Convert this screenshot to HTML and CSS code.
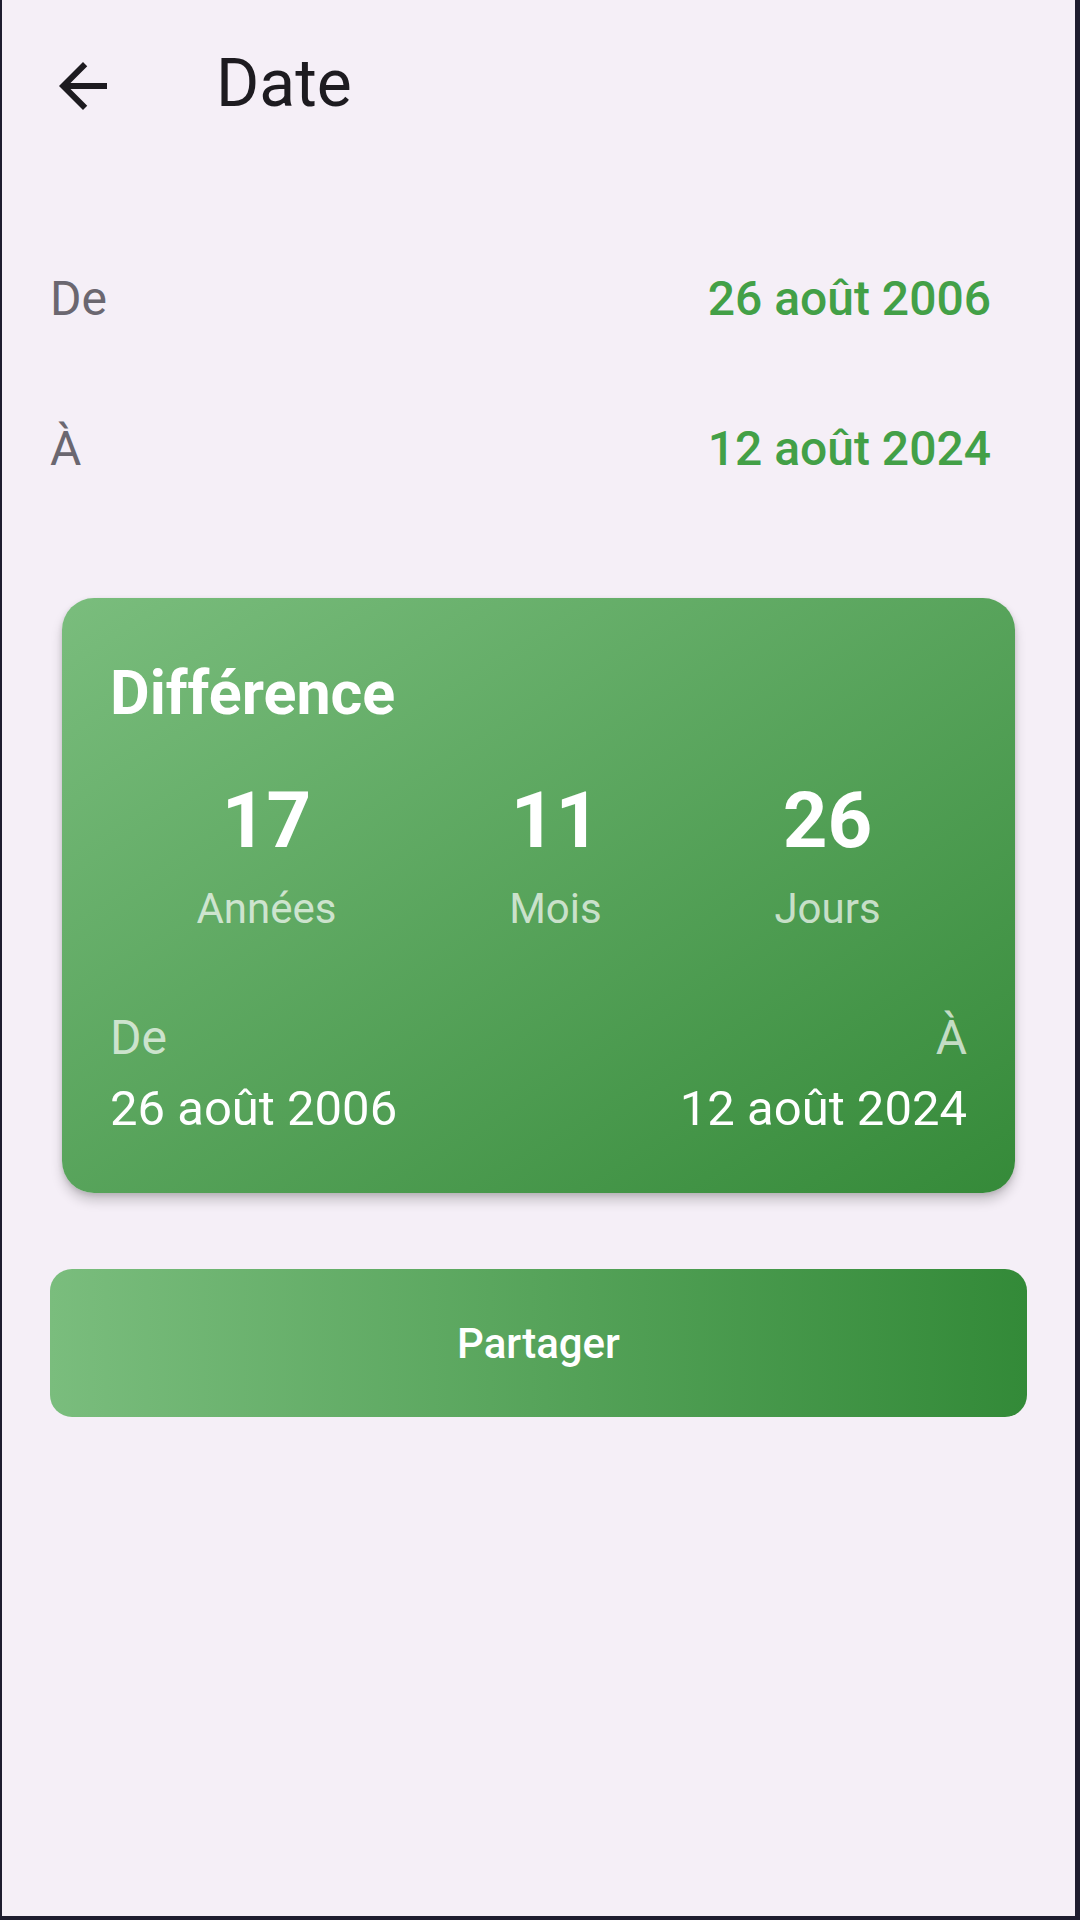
FILE: index.html
```html
<!DOCTYPE html>
<html lang="fr">
<head>
    <meta charset="UTF-8">
    <meta name="viewport" content="width=device-width, initial-scale=1.0">
    <title>Date</title>
    <link rel="stylesheet" href="styles.css">
</head>
<body>
    <div class="app">
        <header class="app-bar">
            <div class="back-button">
                <svg viewBox="0 0 24 24" width="72" height="72">
                    <path d="M20 11H7.83l5.59-5.59L12 4l-8 8 8 8 1.41-1.41L7.83 13H20v-2z" fill="#1d1b20"/>
                </svg>
            </div>
            <div class="title">Date</div>
        </header>

        <div class="content">
            <div class="date-row">
                <div class="row-label">De</div>
                <div class="row-value">26 août 2006</div>
            </div>
            <div class="date-row">
                <div class="row-label">À</div>
                <div class="row-value">12 août 2024</div>
            </div>

            <div class="result-card">
                <div class="card-title">Différence</div>
                <div class="diff-grid">
                    <div class="diff-unit">
                        <div class="diff-number">17</div>
                        <div class="diff-label">Années</div>
                    </div>
                    <div class="diff-unit">
                        <div class="diff-number">11</div>
                        <div class="diff-label">Mois</div>
                    </div>
                    <div class="diff-unit">
                        <div class="diff-number">26</div>
                        <div class="diff-label">Jours</div>
                    </div>
                </div>
                <div class="range">
                    <div class="range-side">
                        <div class="range-label">De</div>
                        <div class="range-date">26 août 2006</div>
                    </div>
                    <div class="range-side range-end">
                        <div class="range-label">À</div>
                        <div class="range-date">12 août 2024</div>
                    </div>
                </div>
            </div>

            <button class="share-button">Partager</button>
        </div>
    </div>
</body>
</html>
```

FILE: styles.css
```css
* {
    box-sizing: border-box;
}

html, body {
    margin: 0;
    padding: 0;
}

body {
    width: 1080px;
    height: 1920px;
    font-family: 'Roboto', 'Noto Sans', sans-serif;
    background: #f5eff7;
    border-left: 2px solid #1e1d2f;
    border-right: 5px solid #1e1d2f;
    border-bottom: 4px solid #1e1d2f;
    overflow: hidden;
}

.app {
    height: 100%;
}

.app-bar {
    display: flex;
    align-items: center;
    height: 168px;
}

.back-button {
    width: 72px;
    height: 72px;
    margin-left: 45px;
    margin-top: 4px;
}

.back-button svg {
    display: block;
}

.title {
    margin-left: 97px;
    font-size: 66px;
    line-height: 80px;
    color: #1d1b20;
}

.content {
    padding: 56px 48px 0;
}

.date-row {
    display: flex;
    justify-content: space-between;
    align-items: center;
    height: 150px;
}

.row-label {
    font-size: 48px;
    line-height: 56px;
    color: #6b6770;
}

.row-value {
    padding-right: 36px;
    font-size: 48px;
    font-weight: 500;
    line-height: 56px;
    color: #43a047;
}

.result-card {
    margin: 74px 12px 0;
    padding: 60px 48px 56px;
    border-radius: 32px;
    color: #fff;
    background: linear-gradient(to bottom right, #7abd7d, #358a39);
    box-shadow: 0 8px 12px rgba(0, 0, 0, 0.18), 0 2px 5px rgba(0, 0, 0, 0.12);
}

.card-title {
    font-size: 61px;
    font-weight: 700;
    line-height: 70px;
}

.diff-grid {
    display: flex;
    justify-content: space-around;
    margin-top: 47px;
}

.diff-unit {
    text-align: center;
}

.diff-number {
    font-size: 78px;
    font-weight: 700;
    line-height: 92px;
}

.diff-label {
    margin-top: 17px;
    font-size: 42px;
    line-height: 50px;
    color: rgba(255, 255, 255, 0.7);
}

.range {
    display: flex;
    justify-content: space-between;
    margin-top: 76px;
}

.range-end {
    text-align: right;
}

.range-label {
    font-size: 48px;
    line-height: 56px;
    color: rgba(255, 255, 255, 0.7);
}

.range-date {
    margin-top: 15px;
    font-size: 49px;
    line-height: 56px;
}

.share-button {
    display: block;
    width: 100%;
    height: 148px;
    margin-top: 76px;
    border: none;
    border-radius: 22px;
    font-family: 'Roboto', 'Noto Sans', sans-serif;
    font-size: 42px;
    font-weight: 500;
    color: #fff;
    background: linear-gradient(to right, #7abd7d, #338a38);
}
```
